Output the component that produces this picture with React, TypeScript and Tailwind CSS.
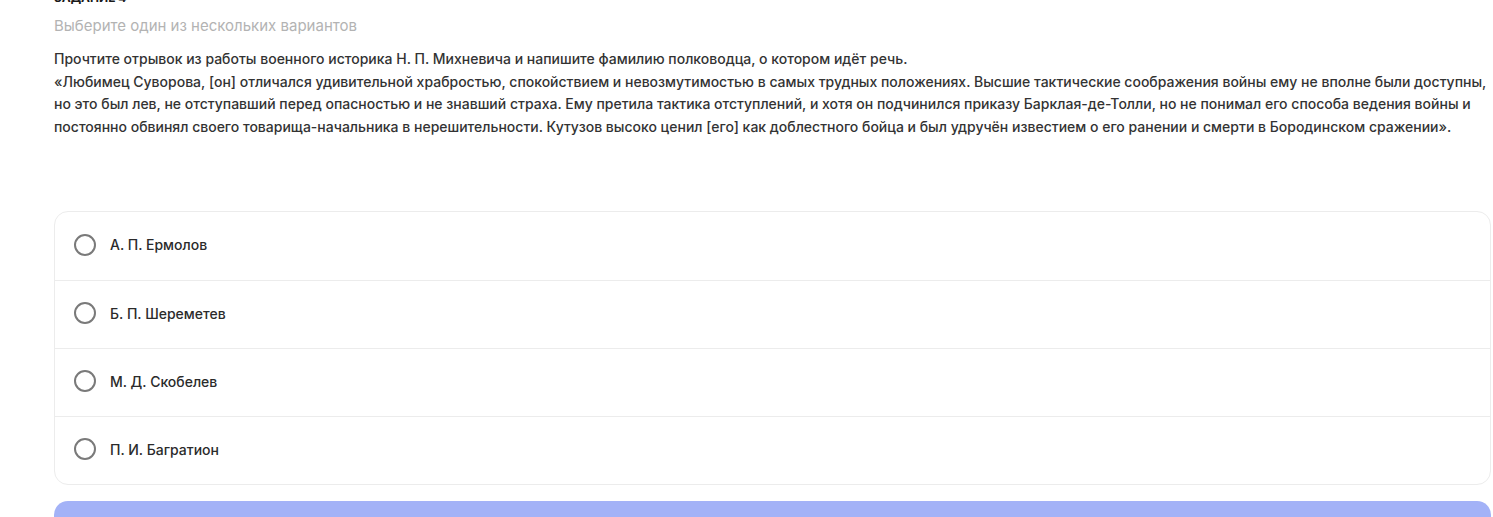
import { useState } from 'react';

const options = [
  { id: 'a', label: 'А. П. Ермолов' },
  { id: 'b', label: 'Б. П. Шереметев' },
  { id: 'c', label: 'М. Д. Скобелев' },
  { id: 'd', label: 'П. И. Багратион' },
];

export default function App() {
  const [selected, setSelected] = useState<string | null>(null);

  return (
    <div
      className="h-[517px] overflow-hidden bg-white pl-[54px] pr-[2px] text-[#2b2b2b]"
      style={{ fontFamily: 'Inter, "Noto Sans", sans-serif' }}
    >
      {/* Task header */}
      <div className="-mt-[10px] text-[12px] font-bold uppercase leading-[16px] text-[#1a1a1a]">
        Задание 4
      </div>
      <div className="mt-[10px] text-[15px] leading-[20px] text-[#b3b3b3]">
        Выберите один из нескольких вариантов
      </div>

      {/* Question */}
      <p className="mt-[12px] text-[14px] font-medium leading-[22.5px] text-[#333]">
        Прочтите отрывок из работы военного историка Н. П. Михневича и напишите фамилию полководца, о котором идёт речь.
        <br />
        «Любимец Суворова, [он] отличался удивительной храбростью, спокойствием и невозмутимостью в самых трудных
        положениях. Высшие тактические соображения войны ему не вполне были доступны, но это был лев, не отступавший
        перед опасностью и не знавший страха. Ему претила тактика отступлений, и хотя он подчинился приказу
        Барклая-де-Толли, но не понимал его способа ведения войны и постоянно обвинял своего товарища-начальника в
        нерешительности. Кутузов высоко ценил [его] как доблестного бойца и был удручён известием о его ранении и
        смерти в Бородинском сражении».
      </p>

      {/* Answer options */}
      <div className="mt-[73px] overflow-hidden rounded-[14px] border border-[#ececec]">
        {options.map((o, i) => (
          <label
            key={o.id}
            className={`flex h-[68px] cursor-pointer items-center gap-[14px] pb-[3px] pl-[19px] ${
              i > 0 ? 'border-t border-[#ececec]' : ''
            }`}
          >
            <input
              type="radio"
              name="answer"
              className="sr-only"
              checked={selected === o.id}
              onChange={() => setSelected(o.id)}
            />
            <span className="flex h-[22px] w-[22px] items-center justify-center rounded-full border-2 border-[#7a7a7a]">
              {selected === o.id && <span className="h-[10px] w-[10px] rounded-full bg-[#6b7cf5]" />}
            </span>
            <span className="text-[14px] font-medium text-[#2b2b2b]">{o.label}</span>
          </label>
        ))}
      </div>

      <button className="mt-[16px] h-[48px] w-full rounded-[14px] bg-[#a3b2f7]" />
    </div>
  );
}
